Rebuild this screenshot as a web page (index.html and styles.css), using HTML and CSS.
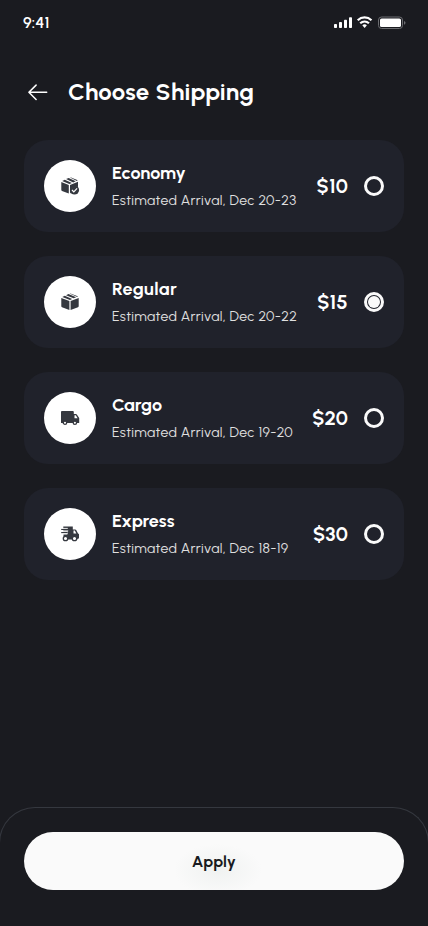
FILE: index.html
```html
<!DOCTYPE html>
<html lang="en">
<head>
<meta charset="utf-8">
<meta name="viewport" content="width=device-width, initial-scale=1">
<title>Choose Shipping</title>
<link rel="stylesheet" href="styles.css">
</head>
<body>
<div class="screen">
  <div class="status">
    <span class="time">9:41</span>
    <svg class="indicators" width="72" height="16" viewBox="0 0 72 16" aria-hidden="true">
      <g fill="#fff">
        <rect x="0" y="9" width="3" height="4" rx=".8"/>
        <rect x="5" y="7" width="3" height="6" rx=".8"/>
        <rect x="10" y="4.7" width="3" height="8.3" rx=".8"/>
        <rect x="15" y="2.3" width="3" height="10.7" rx=".8"/>
        <rect x="46" y="3.5" width="21" height="8.5" rx="1.6"/>
        <path d="M28.3 10.2q2.3-1.9 4.6 0L30.6 12.9z"/>
      </g>
      <g fill="none" stroke="#fff" stroke-width="2.2">
        <path d="M23.7 5.2c4-3.7 9.8-3.7 13.8 0"/>
        <path d="M26.2 8.200c2.6-2.300 6.200-2.300 8.800 0"/>
      </g>
      <rect x="44.5" y="2" width="24" height="11.500" rx="3" fill="none" stroke="#6b6c70"/>
      <path d="M70 6v3.700q1.500-.4 1.500-1.850T70 6z" fill="#6b6c70"/>
    </svg>
  </div>

  <header class="header">
    <svg class="back" width="20" height="18" viewBox="0 0 20 18" fill="none" stroke="#fff" stroke-width="1.500" stroke-linecap="round" stroke-linejoin="round" aria-label="Back">
      <path d="M18.700 9.300H.9M8.100 2.100L.9 9.300l7.200 7.200"/>
    </svg>
    <h1 class="title">Choose Shipping</h1>
  </header>

  <main class="options">
    <section class="option">
      <div class="badge">
        <svg width="20" height="20" viewBox="0 0 20 20" aria-hidden="true">
          <path fill="#35383f" d="M1.300 5.900L8.800 8.900V17.500L2 14.900Q1.300 14.600 1.300 13.800zM10 8.900l8-3.200v5.200a5.200 5.200 0 0 0-7.100 5.900L10 17.500zM2.200 4.900l2.600-1.200 7.100 3.200L9.400 7.900zM6.100 3.100L8.700 2l7 3.300-2.500 1.100zM10 1.500q.5-.2 1 0l5.600 2.300q.6.300 1 .8l-.7.300z"/>
          <circle cx="14.500" cy="14" r="4.600" fill="#35383f"/>
          <path d="M12 14l1.800 1.800 3.300-3.500" fill="none" stroke="#fff" stroke-width="1.200"/>
        </svg>
      </div>
      <div class="details">
        <h2 class="name">Economy</h2>
        <p class="arrival">Estimated Arrival, Dec 20-23</p>
      </div>
      <span class="price">$10</span>
      <span class="radio"></span>
    </section>

    <section class="option">
      <div class="badge">
        <svg width="20" height="20" viewBox="0 0 20 20" aria-hidden="true">
          <path fill="#35383f" d="M1.300 6L9.400 9V18L2 15.200Q1.300 14.900 1.300 14.200zM10.600 9l8.100-3v8.200q0 .7-.7 1L10.600 18zM2.300 4.900l2.500-1.100 7.300 3.100L10 7.900zM6 3.200L8.500 2.100l7.600 3.200-2.500 1zM9.600 1.600q.4-.2.900 0L17 4q.5.200.8.700l-.5.200z"/>
        </svg>
      </div>
      <div class="details">
        <h2 class="name wide">Regular</h2>
        <p class="arrival">Estimated Arrival, Dec 20-22</p>
      </div>
      <span class="price">$15</span>
      <span class="radio selected"></span>
    </section>

    <section class="option">
      <div class="badge">
        <svg width="20" height="20" viewBox="0 0 20 20" aria-hidden="true">
          <path fill="#35383f" d="M1.900 3h11q.9 0 .9.900v2.200h2.100q.7 0 1.100.6l2.200 3.300v4.900H1V3.900q0-.9.900-.9z"/>
          <path fill="#fff" d="M14.500 7.300h1.300l1.800 2.900h-3.100z"/>
          <g fill="#fff" stroke="#35383f" stroke-width="1.300"><circle cx="5" cy="14.700" r="1.700"/><circle cx="14.900" cy="14.700" r="1.700"/></g>
        </svg>
      </div>
      <div class="details">
        <h2 class="name">Cargo</h2>
        <p class="arrival">Estimated Arrival, Dec 19-20</p>
      </div>
      <span class="price">$20</span>
      <span class="radio"></span>
    </section>

    <section class="option">
      <div class="badge">
        <svg width="20" height="20" viewBox="0 0 20 20" aria-hidden="true">
          <path fill="#35383f" d="M3.300 2.600h9.500v3h2.400q.6 0 1 .5l1.700 3.200 1.100.9v4.200h-1l-1 1H3.500V10.300h4.300V7.200H3.300z"/>
          <path d="M1.200 5.400h7.500M1.200 8.600h6.500" stroke="#35383f" stroke-width="1.100"/>
          <path d="M1.200 4.400h6.600M1.200 6.900h7M1.200 9.900h5.800" stroke="#fff" stroke-width=".9"/>
          <path fill="#fff" d="M13.500 6.600h1.300l1.500 3h-2.800z"/>
          <g fill="#fff" stroke="#35383f" stroke-width="1.300"><circle cx="5.500" cy="14.500" r="2.200"/><circle cx="14.500" cy="14.500" r="2.200"/></g>
        </svg>
      </div>
      <div class="details">
        <h2 class="name">Express</h2>
        <p class="arrival">Estimated Arrival, Dec 18-19</p>
      </div>
      <span class="price">$30</span>
      <span class="radio"></span>
    </section>
  </main>

  <footer class="footer">
    <button class="apply" type="button">Apply</button>
  </footer>
</div>
</body>
</html>
```

FILE: styles.css
```css
* { box-sizing: border-box; }

body {
  margin: 0;
  background: #1a1b20;
  color: #fff;
  font-family: Urbanist, Lato, "Open Sans", sans-serif;
}

.screen {
  display: flex;
  flex-direction: column;
  height: 926px;
  overflow: hidden;
}

.status {
  display: flex;
  justify-content: space-between;
  align-items: center;
  height: 44px;
  padding: 1px 22px 0 23px;
}

.time { font-size: 16px; font-weight: 600; letter-spacing: .1px; }

.header {
  display: flex;
  align-items: center;
  gap: 20px;
  height: 48px;
  margin: 24px 24px 0;
  padding-left: 4px;
}

.title {
  margin: 0;
  font-size: 24px;
  font-weight: 700;
  letter-spacing: .27px;
  line-height: 28px;
  white-space: nowrap;
}

.options {
  display: flex;
  flex-direction: column;
  gap: 24px;
  margin: 24px 24px 0;
}

.option {
  display: flex;
  align-items: center;
  gap: 16px;
  height: 92px;
  padding: 0 20px;
  border-radius: 24px;
  background: #20222b;
}

.badge {
  display: flex;
  align-items: center;
  justify-content: center;
  flex: none;
  width: 52px;
  height: 52px;
  border-radius: 50%;
  background: #fff;
}

.details { flex: 1; min-width: 0; white-space: nowrap; }

.name { margin: 0 0 6px; font-size: 18px; font-weight: 700; line-height: 24px; }
.name.wide { letter-spacing: .4px; }

.arrival {
  margin: 0;
  color: #e0e0e0;
  font-size: 14px;
  font-weight: 400;
  letter-spacing: .34px;
  line-height: 20px;
}

.price { font-size: 20px; font-weight: 700; letter-spacing: .2px; line-height: 24px; }

.radio {
  display: flex;
  flex: none;
  width: 20px;
  height: 20px;
  border: 3px solid #fafafa;
  border-radius: 50%;
}
.radio.selected::before {
  content: "";
  width: 12px;
  height: 12px;
  margin: 1px;
  border-radius: 50%;
  background: #fafafa;
}

.footer {
  height: 119px;
  margin: auto -1px 0;
  padding: 24px 24px 0;
  border: 1px solid #35383f;
  border-bottom: 0;
  border-radius: 36px 36px 0 0;
}

.apply {
  display: block;
  width: 100%;
  height: 58px;
  padding: 0;
  border: 0;
  border-radius: 29px;
  background: radial-gradient(ellipse 44px 26px at 194px 38px, #f0f2f1, #fafafa);
  color: #181a20;
  font-family: inherit;
  font-size: 16px;
  font-weight: 700;
  letter-spacing: .3px;
}
```
